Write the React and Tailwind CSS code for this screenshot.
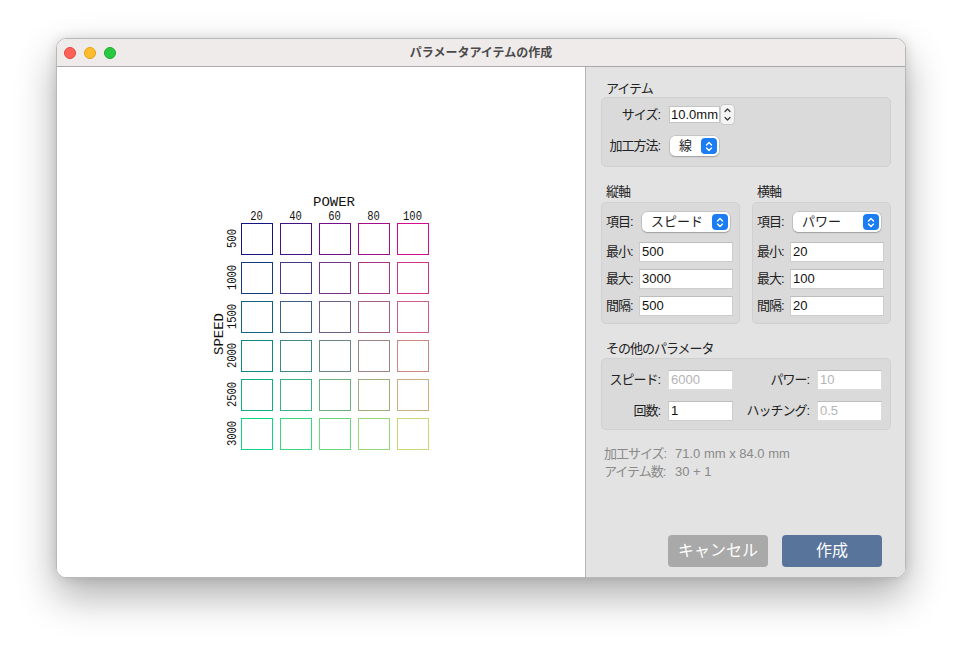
import React from "react";

const TL = [20, 20, 130];
const TR = [210, 10, 140];
const BL = [10, 215, 130];
const BR = [200, 215, 120];
const mix = (a, b, t) => a.map((v, i) => Math.round(v + (b[i] - v) * t));
const colorAt = (r, c) => {
  const s = c / 4;
  const t = r / 5;
  const top = mix(TL, TR, s);
  const bot = mix(BL, BR, s);
  const m = mix(top, bot, t);
  return `rgb(${m[0]},${m[1]},${m[2]})`;
};

const cols = ["20", "40", "60", "80", "100"];
const rows = ["500", "1000", "1500", "2000", "2500", "3000"];

function Canvas() {
  const fx = "Liberation Mono, DejaVu Sans Mono, monospace";
  return (
    <svg width="528" height="510" viewBox="0 0 528 510">
      <text x="277" y="139" fontFamily={fx} fontSize="13" textAnchor="middle" textLength="42" lengthAdjust="spacingAndGlyphs" fill="#111">POWER</text>
      {cols.map((c, i) => (
        <text key={c} x={199.5 + i * 39} y="152.5" fontFamily={fx} fontSize="13" textAnchor="middle" textLength={c.length * 6.3} lengthAdjust="spacingAndGlyphs" fill="#111">{c}</text>
      ))}
      <text transform="translate(162 267) rotate(-90)" fontFamily={fx} fontSize="13" textAnchor="middle" dominantBaseline="central" textLength="42" lengthAdjust="spacingAndGlyphs" fill="#111">SPEED</text>
      {rows.map((r, i) => (
        <text key={r} transform={`translate(175 ${171.5 + i * 39}) rotate(-90)`} fontFamily={fx} fontSize="13" textAnchor="middle" dominantBaseline="central" textLength={r.length * 6.3} lengthAdjust="spacingAndGlyphs" fill="#111">{r}</text>
      ))}
      {rows.map((r, ri) =>
        cols.map((c, ci) => (
          <rect key={r + c} x={184.5 + ci * 39} y={156.5 + ri * 39} width="31" height="31" fill="none" stroke={colorAt(ri, ci)} strokeWidth="1" />
        ))
      )}
    </svg>
  );
}

const Chev = () => (
  <svg width="8" height="11" viewBox="0 0 8 11" fill="none" stroke="white" strokeWidth="1.4" strokeLinecap="round" strokeLinejoin="round">
    <path d="M1.5 4 L4 1.5 L6.5 4" />
    <path d="M1.5 7 L4 9.5 L6.5 7" />
  </svg>
);

function Popup({ text, className }) {
  return (
    <div className={`h-[20px] bg-white rounded-[5px] shadow-[0_0_0_0.5px_rgba(0,0,0,0.18),0_1px_1.5px_rgba(0,0,0,0.2)] flex items-center justify-between pl-[9px] pr-[2px] text-[13px] text-[#222] ${className}`}>
      <span>{text}</span>
      <div className="w-[16px] h-[16px] rounded-[4px] bg-[#1b7cf4] flex items-center justify-center">
        <Chev />
      </div>
    </div>
  );
}

function Field({ value, className, disabled }) {
  return (
    <div className={`h-[20px] bg-white border border-[#cdcdcd] border-t-[#bdbdbd] flex items-center pl-[2px] text-[13px] ${disabled ? "text-[#b4b4b4]" : "text-[#111]"} ${className}`}>
      {value}
    </div>
  );
}

function Label({ children, className }) {
  return <div className={`text-[13px] tracking-[-1px] leading-[17px] h-[17px] text-[#222] pl-[5px] ${className || ""}`}>{children}</div>;
}

function Box({ children, className }) {
  return <div className={`bg-[#dadada] border border-[#d0d0d0] rounded-[5px] ${className}`}>{children}</div>;
}

const lab = "text-[13px] tracking-[-1px] text-[#222] whitespace-nowrap";

function AxisBox({ item, min, max, step }) {
  return (
    <div className="w-[139px] flex flex-col">
      <Box className="pt-[9px] pb-[7px] pl-[4px] pr-[5px] flex flex-col">
        <div className="flex items-center h-[20px]">
          <div className={`w-[36px] ${lab}`}>項目:</div>
          <Popup text={item} className="w-[88px]" />
        </div>
        <div className="flex items-center h-[20px] mt-[10px]">
          <div className={`w-[33px] ${lab}`}>最小:</div>
          <Field value={min} className="w-[94px]" />
        </div>
        <div className="flex items-center h-[20px] mt-[7px]">
          <div className={`w-[33px] ${lab}`}>最大:</div>
          <Field value={max} className="w-[94px]" />
        </div>
        <div className="flex items-center h-[20px] mt-[7px]">
          <div className={`w-[33px] ${lab}`}>間隔:</div>
          <Field value={step} className="w-[94px]" />
        </div>
      </Box>
    </div>
  );
}

export default function App() {
  return (
    <div className="w-[962px] h-[653px] bg-white overflow-hidden pt-[38px] pl-[56px] font-['Liberation_Sans','Noto_Sans_CJK_JP',sans-serif]">
      <div className="w-[850px] h-[540px] rounded-[10px] border border-[#b8b8b8] overflow-hidden flex flex-col shadow-[0_18px_40px_rgba(0,0,0,0.32),0_0_12px_rgba(0,0,0,0.12)]">
        <div className="h-[28px] bg-[#f0ebeb] border-b border-[#a9a9a9] flex items-center relative shrink-0">
          <div className="flex items-center gap-[8px] pl-[7px]">
            <div className="w-[12px] h-[12px] rounded-full bg-[#fe5f57] border-[0.5px] border-[#e2463f]" />
            <div className="w-[12px] h-[12px] rounded-full bg-[#febc2e] border-[0.5px] border-[#e1a116]" />
            <div className="w-[12px] h-[12px] rounded-full bg-[#28c840] border-[0.5px] border-[#1aab29]" />
          </div>
          <div className="absolute inset-0 flex items-center justify-center text-[12px] font-bold text-[#4a4a4a] pointer-events-none">
            パラメータアイテムの作成
          </div>
        </div>
        <div className="flex flex-1 min-h-0">
          <div className="w-[529px] bg-white border-r border-[#b4b4b4] shrink-0">
            <Canvas />
          </div>
          <div className="flex-1 bg-[#e3e3e3] pl-[15px] pr-[14px] pt-[13px] pb-[10px] flex flex-col">
            <Label>アイテム</Label>
            <Box className="h-[70px] pt-[8px] flex flex-col">
              <div className="flex items-center h-[17px]">
                <div className={`w-[58px] text-right ${lab}`}>サイズ:</div>
                <div className="ml-[9px] w-[51px] h-[17px] bg-white border border-[#c4c4c4] flex items-center pl-[1px] text-[13px] text-[#111] whitespace-nowrap">10.0mm</div>
                <div className="ml-[1px] w-[13px] h-[19px] rounded-[3px] bg-[#f4f4f4] shadow-[0_0_0_0.5px_rgba(0,0,0,0.15)] flex flex-col items-center justify-center">
                  <svg width="9" height="17" viewBox="0 0 9 17" fill="none" stroke="#333" strokeWidth="1.2" strokeLinecap="round" strokeLinejoin="round">
                    <path d="M2 5.5 L4.5 3 L7 5.5" />
                    <path d="M2 11.5 L4.5 14 L7 11.5" />
                  </svg>
                </div>
              </div>
              <div className="flex items-center h-[20px] mt-[13px]">
                <div className={`w-[58px] text-right ${lab}`}>加工方法:</div>
                <Popup text="線" className="ml-[10px] w-[49px] pl-[8px]" />
              </div>
            </Box>

            <div className="flex gap-[12px] mt-[16px]">
              <Label className="w-[139px]">縦軸</Label>
              <Label className="w-[139px]">横軸</Label>
            </div>
            <div className="flex gap-[12px] mt-[2px]">
              <AxisBox item="スピード" min="500" max="3000" step="500" />
              <AxisBox item="パワー" min="20" max="100" step="20" />
            </div>

            <Label className="mt-[16px]">その他のパラメータ</Label>
            <Box className="mt-[1px] h-[72px] pt-[11px] flex flex-col">
              <div className="flex items-center h-[20px]">
                <div className={`w-[58px] text-right ${lab}`}>スピード:</div>
                <Field value="6000" disabled className="ml-[8px] w-[65px] border-[#dcdcdc]" />
                <div className={`w-[76px] text-right ${lab}`}>パワー:</div>
                <Field value="10" disabled className="ml-[8px] w-[65px] border-[#dcdcdc]" />
              </div>
              <div className="flex items-center h-[20px] mt-[11px]">
                <div className={`w-[58px] text-right ${lab}`}>回数:</div>
                <Field value="1" className="ml-[8px] w-[65px]" />
                <div className={`w-[76px] text-right ${lab}`}>ハッチング:</div>
                <Field value="0.5" disabled className="ml-[8px] w-[65px] border-[#dcdcdc]" />
              </div>
            </Box>

            <div className="mt-[15px] pl-[3px] text-[13px] text-[#8a8a8a] leading-[18px]">
              <div className="flex"><div className="w-[71px] tracking-[-1px]">加工サイズ:</div><div>71.0 mm x 84.0 mm</div></div>
              <div className="flex"><div className="w-[71px] tracking-[-1px]">アイテム数:</div><div>30 + 1</div></div>
            </div>

            <div className="mt-auto flex justify-end gap-[14px] pr-[9px]">
              <div className="w-[100px] h-[32px] rounded-[4px] bg-[#a9a9a9] text-white text-[16px] flex items-center justify-center">キャンセル</div>
              <div className="w-[100px] h-[32px] rounded-[4px] bg-[#58749b] text-white text-[16px] flex items-center justify-center">作成</div>
            </div>
          </div>
        </div>
      </div>
    </div>
  );
}
